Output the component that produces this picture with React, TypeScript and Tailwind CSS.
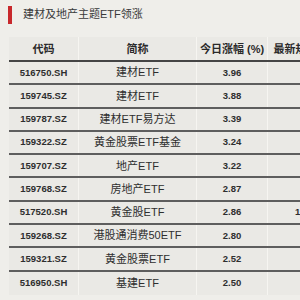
const rows = [
  { code: "516750.SH", name: "建材ETF", pct: "3.96", size: "" },
  { code: "159745.SZ", name: "建材ETF", pct: "3.88", size: "" },
  { code: "159787.SZ", name: "建材ETF易方达", pct: "3.39", size: "" },
  { code: "159322.SZ", name: "黄金股票ETF基金", pct: "3.24", size: "" },
  { code: "159707.SZ", name: "地产ETF", pct: "3.22", size: "" },
  { code: "159768.SZ", name: "房地产ETF", pct: "2.87", size: "" },
  { code: "517520.SH", name: "黄金股ETF", pct: "2.86", size: "108.54671" },
  { code: "159268.SZ", name: "港股通消费50ETF", pct: "2.80", size: "" },
  { code: "159321.SZ", name: "黄金股票ETF", pct: "2.52", size: "" },
  { code: "516950.SH", name: "基建ETF", pct: "2.50", size: "" },
];

const font = { fontFamily: '"Liberation Sans", "Noto Sans CJK SC", sans-serif' };

export default function App() {
  return (
    <div className="h-[300px] w-[300px] overflow-hidden bg-[#efeeea] text-[#333]" style={font}>
      <div className="flex h-[28px] items-center pl-[8px] pt-[1px]">
        <div className="h-[18px] w-[4px] bg-[#c8282c]" />
        <div className="ml-[11px] text-[11px] leading-none text-[#3a3a3a]">建材及地产主题ETF领涨</div>
      </div>
      <div className="ml-[9px] mt-[9px] w-[360px] bg-[#eae9e5]">
        <div className="flex h-[25px] whitespace-nowrap border-b-2 border-[#454545] text-[11px] font-bold text-[#2a2a2a]">
          <div className="flex w-[69px] shrink-0 items-center justify-center pt-[2px]">代码</div>
          <div className="flex w-[118px] shrink-0 items-center justify-center border-l border-[#f6f5f1] pt-[2px]">简称</div>
          <div className="flex w-[71px] shrink-0 items-center justify-center border-l border-[#f6f5f1] pt-[2px]">今日涨幅 (%)</div>
          <div className="flex w-[100px] shrink-0 items-center justify-center border-l border-[#f6f5f1] pt-[2px]">最新规模（亿元）</div>
        </div>
        {rows.map((r, i) => (
          <div
            key={r.code}
            className={`flex h-[23.3px] text-[#2e2e2e] ${i < rows.length - 1 ? "border-b-2 border-[#5e5e5e]" : ""}`}
          >
            <div className="flex w-[69px] shrink-0 items-center justify-center text-[9.5px] font-semibold">{r.code}</div>
            <div className="flex w-[118px] shrink-0 items-center justify-center border-l border-[#f6f5f1] text-[11px]">{r.name}</div>
            <div className="flex w-[71px] shrink-0 items-center justify-center border-l border-[#f6f5f1] text-[9.5px] font-semibold">{r.pct}</div>
            <div className="flex w-[100px] shrink-0 items-center justify-center border-l border-[#f6f5f1] text-[9.5px] font-semibold">{r.size}</div>
          </div>
        ))}
      </div>
    </div>
  );
}
